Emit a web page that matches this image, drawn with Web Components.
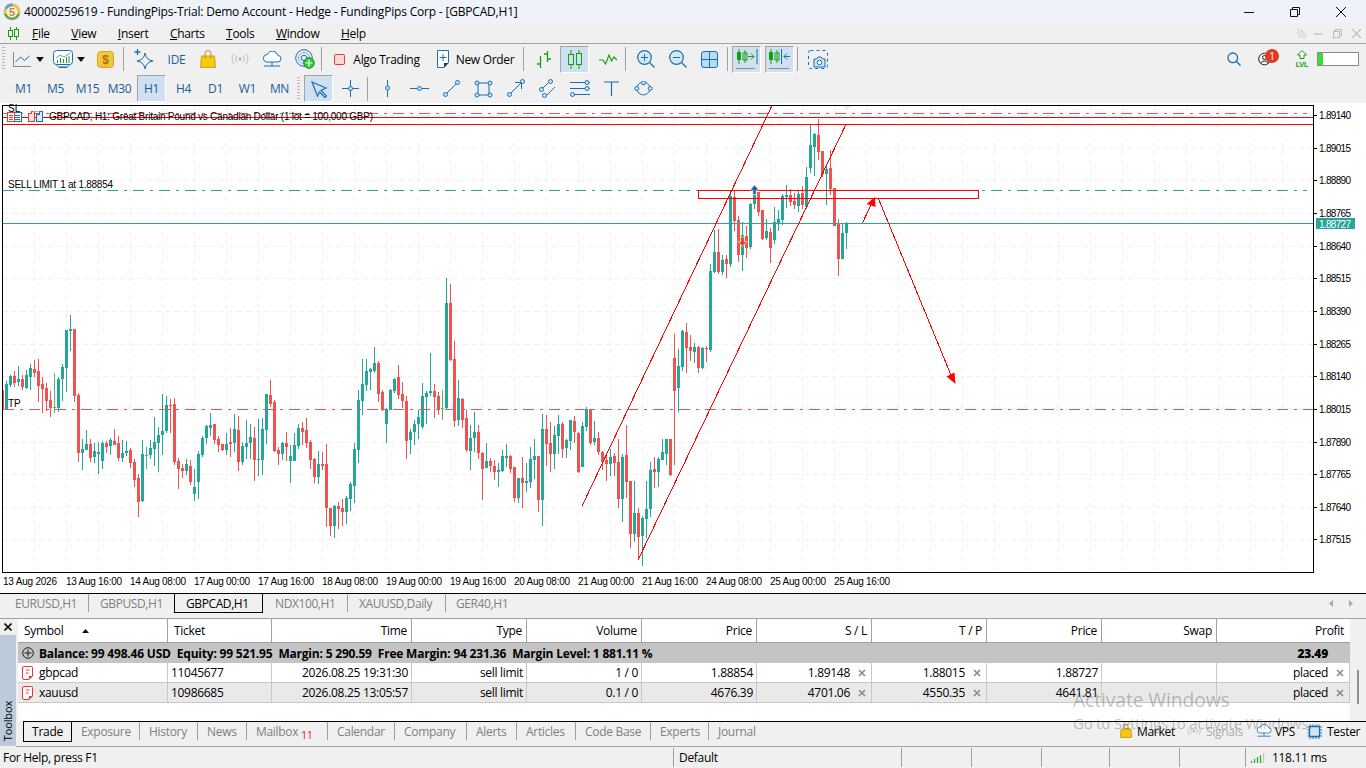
<!DOCTYPE html>
<html>
<head>
<meta charset="utf-8">
<title>FundingPips MT5</title>
<style>
  html, body { margin: 0; height: 100%; overflow: hidden; background: #f0f0f0; }
  body {
    display: flex;
    flex-direction: column;
    width: 1366px;
    height: 768px;
    font: 12px "Open Sans", "Noto Sans", sans-serif;
    letter-spacing: -0.3px;
    color: #000;
  }
</style>
</head>
<body>
  <win-titlebar></win-titlebar>
  <win-menubar></win-menubar>
  <main-toolbar></main-toolbar>
  <draw-toolbar></draw-toolbar>
  <price-chart></price-chart>
  <chart-tabs></chart-tabs>
  <terminal-panel></terminal-panel>
  <status-bar></status-bar>
  <activation-mark></activation-mark>

<script>
const BLUE = '#1a6fb0';
const GREEN = '#12a012';
const line = (d, c = BLUE, w = 1) => `<path d="${d}" fill="none" stroke="${c}" stroke-width="${w}"/>`;
const dot = (x, y, r = 2, c = BLUE, f = '#cfe6f8') => `<circle cx="${x}" cy="${y}" r="${r}" fill="${f}" stroke="${c}"/>`;
const svg = (w, h, body) => `<svg width="${w}" height="${h}" viewBox="0 0 ${w} ${h}" style="display:block">${body}</svg>`;

const ICONS = {
  lineChart: svg(18, 16, line('M.5 1V15.5H18', '#8a8a8a') + line('M2.5 11l5-5 4 3.5 5-4.5')),
  caret: svg(8, 5, '<path d="M0 0H8L4 5Z" fill="#111"/>'),
  monitor: svg(20, 19, '<rect x=".5" y=".5" width="19" height="14" rx="3" fill="#fff" stroke="#1a6fb0"/>'
    + line('M3 8L7 5l4 2 6-4', '#7a9ab5')
    + line('M4.5 13V10M7.5 13V8M10.5 13V9M13.5 13V7M16 13V6', '#1aa03a')
    + line('M6 17H14', BLUE) + line('M3 14.5L6 17.5H14L17 14.5', BLUE)),
  dollar: svg(17, 17, '<rect x=".5" y=".5" width="16" height="16" rx="3" fill="#f3c63f" stroke="#d6a52a"/>'
    + '<text x="8.5" y="13" text-anchor="middle" font-family="Liberation Sans" font-size="12" font-weight="700" fill="#a8740a">$</text>'),
  spark: svg(20, 20, line('M11 4Q12 11 19 12Q12 13 11 20Q10 13 3 12Q10 11 11 4Z') + line('M3.5 0V6M.5 3H6.5', BLUE, 1.4)),
  bag: svg(16, 18, '<path d="M1.5 6H14.5L15.5 17.5H.5Z" fill="#f8c80c" stroke="#c9a02a"/>' + line('M5 8V3.5a3 3 0 0 1 6 0V8', '#b88f20')),
  signal: svg(18, 12, '<circle cx="9" cy="6" r="1.8" fill="#bbb"/>' + line('M6 2.5a5 5 0 0 0 0 7M12 2.5a5 5 0 0 1 0 7M3 .8a8.5 8.5 0 0 0 0 10.4M15 .8a8.5 8.5 0 0 1 0 10.4', '#bbb')),
  cloud: svg(20, 17, '<path d="M5 11H15.5a3.3 3.3 0 0 0 .3-6.6A5.6 5.6 0 0 0 5.2 3.6A3.7 3.7 0 0 0 5 11Z" fill="#fff" stroke="#1a6fb0"/>' + line('M10 11V15M2 15H18')),
  radar: svg(20, 20, '<circle cx="9" cy="9" r="8.3" fill="none" stroke="#1a6fb0"/><circle cx="9" cy="9" r="5.5" fill="none" stroke="#7ab0d8"/><circle cx="9" cy="9" r="2.8" fill="none" stroke="#1a6fb0"/>'
    + '<circle cx="14" cy="14" r="5.3" fill="#2ecc40" stroke="#0f8f1f"/>' + line('M14 10.5V17.5M10.5 14H17.5', '#fff', 1.2)),
  algo: svg(11, 11, '<rect x=".5" y=".5" width="10" height="10" rx="1" fill="#fbd8d0" stroke="#e53935"/>'),
  order: svg(14, 18, '<path d="M1.5 .5H12.5V12.5L8 17.5H1.5Z" fill="#fff" stroke="#1a6fb0"/>' + line('M7 4V11M3.5 7.5H10.5') + '<path d="M8 17.5V13H12.5Z" fill="#333"/>'),
  bars: svg(18, 18, line('M5.5 6V18M2 14H5.5M12.5 1V12M12.5 4H9M12.5 9H16', GREEN, 1.3)),
  candles: svg(16, 19, line('M4 0V19M12 0V19', GREEN) + `<rect x="1.5" y="4.5" width="5" height="10" fill="#cfe0f0" stroke="${GREEN}"/><rect x="9.5" y="3.5" width="5" height="11" fill="#cfe0f0" stroke="${GREEN}"/>`),
  lineGreen: svg(18, 14, line('M0 8H4L6.5 12L10 3L12.5 9L15 5L18 8', GREEN, 1.2)),
  zoomIn: svg(18, 18, '<circle cx="7.5" cy="7.5" r="6.8" fill="#cfe8fa" stroke="#1a6fb0" stroke-width="1.2"/>' + line('M7.5 4V11M4 7.5H11') + line('M12.5 12.5L17.5 17.5', BLUE, 1.2)),
  zoomOut: svg(18, 18, '<circle cx="7.5" cy="7.5" r="6.8" fill="#cfe8fa" stroke="#1a6fb0" stroke-width="1.2"/>' + line('M4 7.5H11') + line('M12.5 12.5L17.5 17.5', BLUE, 1.2)),
  tile: svg(17, 17, '<rect x=".5" y=".5" width="16" height="16" rx="2.5" fill="#b7dcf8" stroke="#1a6fb0"/>' + line('M8.5 1V16M1 8.5H16')),
  autoScroll: svg(23, 22, line('M4 1V16M10 2V15', GREEN) + '<rect x="2" y="4" width="4" height="8" fill="#12a012"/><rect x="8" y="5" width="4" height="7" fill="none" stroke="#12a012"/>'
    + line('M13 8.5H19M16 5.5L19 8.5L16 11.5', GREEN) + line('M22 1V16') + line('M1 20.5H20', '#8a8a8a')),
  chartShift: svg(23, 22, line('M3 1V16M9 2V15', GREEN) + '<rect x="1" y="4" width="4" height="8" fill="#12a012"/><rect x="7" y="5" width="4" height="7" fill="none" stroke="#12a012"/>'
    + line('M13.5 1V16') + line('M22 8.5H16M19 5.5L16 8.5L19 11.5', BLUE) + line('M1 20.5H21', '#8a8a8a')),
  camera: svg(20, 19, '<rect x=".5" y=".5" width="19" height="18" rx="2" fill="none" stroke="#1a6fb0" stroke-dasharray="3 3"/>'
    + '<path d="M6 9H8.5L10 7H13L14.5 9H17V17H6Z" fill="#cfe6f8" stroke="#1a6fb0"/><circle cx="11.5" cy="12.5" r="2.3" fill="#fff" stroke="#1a6fb0"/>'),
  cursor: svg(18, 18, '<path d="M2 2L16 8L11 10.5L16.5 16L15 17.5L9.5 12L7.5 16Z" fill="#cfe0f0" stroke="#1a6fb0" stroke-width="1.2"/>'),
  cross: svg(17, 17, line('M8.5 0V6.5M8.5 10.5V17M0 8.5H6.5M10.5 8.5H17') + dot(8.5, 8.5)),
  vLine: svg(7, 17, line('M3.5 0V6M3.5 10V17') + dot(3.5, 8)),
  hLine: svg(19, 7, line('M0 3.5H7M12 3.5H19') + dot(9.5, 3.5)),
  trend: svg(19, 19, line('M5 14L14 5') + dot(3.5, 15.5) + dot(15.5, 3.5)),
  rect: svg(19, 18, line('M4 3H15V15H4Z') + dot(3, 3) + dot(16, 3) + dot(3, 15) + dot(16, 15)),
  arrow: svg(19, 19, line('M5 14L15 4M9 3.5H15.5V10') + dot(3.5, 15.5) + dot(16.5, 2.5)),
  channel: svg(19, 19, line('M5 9L11 3M8 17L17 8') + dot(3.5, 10.5) + dot(12.5, 2.5) + dot(6.5, 16.5)),
  fibo: svg(20, 17, line('M4 2.5H20M4 8.5H20M4 14.5H20M0 2.5H12M0 8.5H12') + dot(17, 2.5) + dot(2.5, 14.5) + dot(17, 8.5)),
  text: svg(15, 15, line('M0 1H15M7.5 1V15', BLUE, 1.2)),
  ellipse: svg(19, 15, line('M3 5Q9 -3 16 5M3 10Q9 18 16 10') + dot(2.8, 7.5) + dot(16.2, 7.5) + dot(9.5, 1.8)),
  search: svg(14, 14, '<circle cx="5.8" cy="5.8" r="4.8" fill="none" stroke="#1a6fb0" stroke-width="1.3"/>' + line('M9.3 9.3L13.5 13.5', BLUE, 1.4)),
  user: svg(13, 14, '<circle cx="6.5" cy="7" r="5.8" fill="none" stroke="#222"/><circle cx="6.5" cy="5.5" r="2" fill="none" stroke="#222"/>' + line('M2.5 11Q6.5 7 10.5 11', '#222')),
  lvl: svg(14, 18, '<path d="M7 .5L11.5 5H9V8.5H5V5H2.5Z" fill="#fff" stroke="#12a012"/>'
    + '<text x="7" y="17" text-anchor="middle" font-family="Liberation Sans" font-size="7.5" font-weight="700" fill="#12a012">LVL</text>'),
  chip: svg(15, 15, line('M3 .5V15M6 .5V15M9 .5V15M12 .5V15M.5 3H15M.5 6H15M.5 9H15M.5 12H15', BLUE) + '<rect x="2.5" y="2.5" width="10" height="10" rx="1" fill="#cfe6f8" stroke="#1a6fb0" stroke-width="1.3"/>'),
  docRed: svg(11, 14, '<path d="M2 .5H9.5A1 1 0 0 1 10.5 1.5V10L7 13.5H2A1.5 1.5 0 0 1 .5 12V2A1.5 1.5 0 0 1 2 .5Z" fill="#fff" stroke="#e53935"/>' + line('M4 4H7.5M4 7H6.5', '#e53935') + '<path d="M7 13.5V10H10.5Z" fill="#e53935"/>'),
  xMark: svg(8, 8, line('M1 1L7 7M7 1L1 7', '#8a8a8a', 1.6)),
  plusRound: svg(12, 12, '<circle cx="6" cy="6" r="5.3" fill="none" stroke="#222"/>' + line('M6 2.5V9.5M2.5 6H9.5', '#222'))
};

class ToolBtn extends HTMLElement {
  constructor() {
    super();
    const root = this.attachShadow({ mode: 'open' });
    root.innerHTML = `
      <style>
        :host {
          display: flex;
          flex: none;
          align-items: center;
          justify-content: center;
          box-sizing: border-box;
          width: var(--w, 29px);
          height: 27px;
          margin-left: var(--ml, 3px);
          white-space: nowrap;
          color: var(--tc, #1d5c96);
        }
        :host([pressed]) {
          background: #cfe0f0;
          border-top: 1px solid #a3a3a3;
          border-left: 1px solid #a3a3a3;
          border-right: 1px solid #fff;
          border-bottom: 1px solid #fff;
        }
      </style>
      <slot></slot>`;
  }
}

class WinTitlebar extends HTMLElement {
  constructor() {
    super();
    const root = this.attachShadow({ mode: 'open' });
    root.innerHTML = `
      <style>
        :host { display: flex; flex: none; align-items: center; height: 23px; background: #eef3fa; padding: 0 2px 0 3px; }
        .name { margin-left: 3px; white-space: nowrap; flex: 1; letter-spacing: -0.19px; }
        .ctl { display: flex; }
        .ctl span { width: 46px; display: flex; justify-content: center; }
      </style>
      ${svg(18, 18, '<circle cx="9" cy="9" r="8.5" fill="#e7c15a"/><path d="M1 11A8.5 8.5 0 0 0 17 11L9 9Z" fill="#5aa66a"/><path d="M1.5 5A8.5 8.5 0 0 1 10 .6L9 9Z" fill="#6d9fc9"/><circle cx="9" cy="9" r="5.6" fill="#fdf3d6"/><text x="9" y="13" text-anchor="middle" font-family="Liberation Sans" font-size="11" font-weight="700" fill="#c08a24">5</text>')}
      <div class="name">40000259619 - FundingPips-Trial: Demo Account - Hedge - FundingPips Corp - [GBPCAD,H1]</div>
      <div class="ctl">
        <span>${svg(10, 10, line('M0 5.5H10', '#111'))}</span>
        <span>${svg(10, 10, line('M.5 2.5H7.5V9.5H.5ZM2.5 2.5V.5H9.5V7.5H7.5', '#111'))}</span>
        <span>${svg(10, 10, line('M0 0L10 10M10 0L0 10', '#111'))}</span>
      </div>`;
  }
}

class WinMenubar extends HTMLElement {
  constructor() {
    super();
    const items = ['File', 'View', 'Insert', 'Charts', 'Tools', 'Window', 'Help'];
    const root = this.attachShadow({ mode: 'open' });
    root.innerHTML = `
      <style>
        :host { display: flex; flex: none; align-items: center; height: 20px; background: #f0f0f0; border-bottom: 1px solid #a0a0a0; padding-left: 8px; }
        .items { display: flex; gap: 21.5px; margin-left: 13px; flex: 1; }
        u { text-decoration-thickness: 1px; }
        .mdi { display: flex; gap: 10px; align-items: center; padding-right: 5px; }
        .pin { margin-right: -3px; }
      </style>
      ${svg(11, 13, line('M2.5 0V13M8.5 0V13', GREEN) + `<rect x=".5" y="3.5" width="4" height="6" fill="#e8f5e8" stroke="${GREEN}"/><rect x="6.5" y="2.5" width="4" height="7" fill="#e8f5e8" stroke="${GREEN}"/>`)}
      <div class="items">${items.map((t) => `<span><u>${t[0]}</u>${t.slice(1)}</span>`).join('')}</div>
      <div class="mdi">
        <span class="pin">${svg(11, 11, line('M1 1L10 10M4 1L10 7M1 4L7 10M2 10L5 7', '#c4c4c4'))}</span>
        ${svg(9, 9, line('M0 5H9', '#bdbdbd', 1.2))}
        ${svg(9, 9, line('M.5 2.5H6.5V8.5H.5ZM2.5 2.5V.5H8.5V6.5H6.5', '#bdbdbd', 1.2))}
        ${svg(9, 9, line('M0 0L9 9M9 0L0 9', '#bdbdbd', 1.2))}
      </div>`;
  }
}

class MainToolbar extends HTMLElement {
  constructor() {
    super();
    const btn = (ml, w, html, extra = '') => `<tool-btn style="--ml:${ml}px;--w:${w}px" ${extra}>${html}</tool-btn>`;
    const sep = (ml) => `<i class="sep" style="margin-left:${ml}px"></i>`;
    const root = this.attachShadow({ mode: 'open' });
    root.innerHTML = `
      <style>
        :host { display: flex; flex: none; align-items: center; height: 30px; background: #f0f0f0; --tc: #000; position: relative; }
        .sep { flex: none; width: 1px; height: 24px; background: #a0a0a0; }
        .grip { flex: none; margin-left: 2px; width: 3px; height: 24px; background: repeating-linear-gradient(#b5b5b5 0 1px, transparent 1px 3px); }
        .right { margin-left: auto; display: flex; align-items: center; }
        .badge { position: absolute; left: 1265px; top: 5px; width: 14px; height: 14px; border-radius: 50%; background: #e23b22; color: #fff; font-size: 10px; line-height: 14px; text-align: center; letter-spacing: 0; }
        .meter { width: 42px; height: 14px; box-sizing: border-box; border: 1px solid #8a8a8a; background: linear-gradient(90deg, #3ddc3d 0 5px, #fff 5px); margin: 0 7px 0 8px; }
      </style>
      <i class="grip"></i>
      ${btn(8, 18, ICONS.lineChart)}${btn(5, 8, ICONS.caret)}
      ${btn(9, 20, ICONS.monitor)}${btn(4, 8, ICONS.caret)}
      ${btn(12, 17, ICONS.dollar)}
      ${sep(9)}
      ${btn(10, 20, ICONS.spark)}
      ${btn(13, 19, '<span style="color:#1d5c96">IDE</span>')}
      ${btn(14, 16, ICONS.bag)}
      ${btn(15, 18, ICONS.signal)}
      ${btn(13, 20, ICONS.cloud)}
      ${btn(13, 20, ICONS.radar)}
      ${sep(6)}
      ${btn(12, 11, ICONS.algo)}
      ${btn(8, 67, 'Algo Trading')}
      ${btn(16, 14, ICONS.order)}
      ${btn(6, 58, 'New Order')}
      ${sep(9)}
      ${btn(11, 18, ICONS.bars)}
      ${btn(7, 29, ICONS.candles, 'pressed')}
      ${btn(10, 18, ICONS.lineGreen)}
      ${sep(8)}
      ${btn(11, 18, ICONS.zoomIn)}
      ${btn(14, 18, ICONS.zoomOut)}
      ${btn(14, 17, ICONS.tile)}
      ${sep(9)}
      ${btn(4, 29, ICONS.autoScroll, 'pressed')}
      ${btn(4, 29, ICONS.chartShift, 'pressed')}
      ${sep(3)}
      ${btn(10, 20, ICONS.camera)}
      <div class="right">
        ${btn(0, 14, ICONS.search)}
        ${btn(17, 13, ICONS.user)}
        ${btn(24, 14, ICONS.lvl)}
        <div class="meter"></div>
      </div>
      <span class="badge">1</span>`;
  }
}

class DrawToolbar extends HTMLElement {
  constructor() {
    super();
    const periods = ['M1', 'M5', 'M15', 'M30', 'H1', 'H4', 'D1', 'W1', 'MN'];
    const tools = ['vLine', 'hLine', 'trend', 'rect', 'arrow', 'channel', 'fibo', 'text', 'ellipse'];
    const root = this.attachShadow({ mode: 'open' });
    root.innerHTML = `
      <style>
        :host { display: flex; flex: none; align-items: center; height: 29px; background: #f0f0f0; padding-left: 6px; }
        .grip { flex: none; margin-left: 3px; width: 3px; height: 24px; background: repeating-linear-gradient(#b5b5b5 0 1px, transparent 1px 3px); }
        .sep { flex: none; width: 1px; height: 24px; margin-left: 2px; background: #a0a0a0; }
      </style>
      ${periods.map((p) => `<tool-btn ${p === 'H1' ? 'pressed' : ''}>${p}</tool-btn>`).join('')}
      <i class="grip"></i>
      <tool-btn style="--ml:4px" pressed>${ICONS.cursor}</tool-btn>
      <tool-btn>${ICONS.cross}</tool-btn>
      <i class="sep"></i>
      <tool-btn style="--ml:5px">${ICONS[tools[0]]}</tool-btn>
      ${tools.slice(1).map((t) => `<tool-btn>${ICONS[t]}</tool-btn>`).join('')}`;
  }
}

// candles read off the chart: colour, high, body top, body bottom, low (in 3x pixels from y=270)
const CANDLES_LEFT = `r 360 360 420 420|t 333 342 418 418|t 315 319 345 352|r 303 318 338 352|t 288 327 336 348|r 315 327 351 360|t 300 315 354 357|t 282 294 321 360|r 270 297 309 321|r 267 303 348 396|r 321 342 357 429|r 339 354 393 423|r 363 390 414 441|g 309 411 414 429|t 321 327 414 426|t 282 291 327 393|t 180 180 294 366|t 135 177 183 243|r 177 177 378 396|r 369 375 549 576|t 507 537 549 600|t 480 522 540 540|r 507 522 564 576|t 519 543 561 579|t 516 546 552 612|t 513 519 573 597|r 513 519 531 549|t 504 510 528 555|r 477 513 525 525|r 498 519 564 573|t 510 549 564 576|t 513 543 549 558|r 534 540 579 594|r 567 576 630 651|r 612 624 696 741|t 510 552 693 696|g 531 555 558 597|t 510 534 555 567|t 441 516 537 588|t 471 495 519 606|t 372 483 495 555|t 378 405 483 489|r 387 405 408 489|r 384 402 576 585|r 564 573 597 657|r 582 594 603 624|t 567 582 603 615|r 570 588 636 645|t 597 651 672 693|t 543 552 636 687|t 498 504 555 561|t 465 468 504 522|t 429 465 474 498|r 462 462 510 522|r 498 507 525 546|r 522 522 540 543|t 489 522 540 555|r 474 516 522 561|t 432 477 519 546|r 438 480 576 603|t 516 528 576 585|t 450 519 531 567|t 462 501 519 567|r 471 504 570 633|t 447 567 570 618|t 444 477 570 615|t 372 372 480 522|r 330 375 402 411|r 390 396 543 546|r 531 540 552 585|t 516 519 552 570|r 486 519 531 573|t 525 558 573 639|t 489 525 573 573|t 462 474 528 537|r 456 474 486 525|r 444 480 519 534|r 510 516 570 597|r 564 567 621 639|t 543 582 621 642|r 546 582 588 600|r 522 582 714 771|r 714 714 768 798|t 705 708 768 804|r 696 708 717 777`;
const CANDLES_MID = `r 687 714 726 768|t 678 684 726 762|t 636 642 687 723|t 519 537 648 699|t 360 390 540 579|t 267 342 393 435|t 267 303 345 363|t 294 297 306 360|t 231 279 303 309|r 273 279 372 396|r 360 366 420 423|t 414 417 462 519|t 357 360 420 420|t 324 327 363 369|r 285 321 375 387|r 336 372 393 414|r 378 393 513 567|t 477 486 510 552|t 450 462 486 525|t 420 441 462 507|t 339 378 471 477|t 363 369 381 462|t 249 363 369 378|r 342 363 381 444|r 366 378 420 435|g 360 414 417 450|t 24 99 414 420|r 42 99 270 273|r 213 267 453 471|t 330 384 450 468|r 384 387 450 474|r 420 444 540 546|t 465 504 543 600|t 426 486 504 546|r 465 486 549 567|r 546 549 597 690|t 519 573 594 594|r 564 573 588 606|r 570 588 606 630|t 579 600 606 651|t 540 558 603 606|t 522 558 564 591|r 555 558 597 609|r 591 591 684 696|t 624 624 684 699|r 561 624 639 714|t 579 633 639 666|t 531 567 636 654|t 507 558 570 627|r 558 558 690 726|t 432 477 690 768|r 435 477 522 588|r 456 519 552 606|t 468 495 552 597|t 435 462 498 552|r 456 462 537 564|t 507 510 534 564|t 450 450 513 540|r 438 453 486 519|r 486 489 606 609|t 456 468 591 591|t 411 417 471 483|r 417 417 519 525|t 453 504 516 525|r 486 504 546 555|r 543 546 576 600|r 555 570 582 633|t 537 561 582 618|r 549 558 579 618|r 507 576 687 714|t 552 561 687 756|r 465 555 636 684|r 633 633 792 834|t 633 729 792 816|r 714 729 801 870|t 738 744 798 888|t 633 717 747 804|t 576 600 717 741|r 561 597 606 654|t 561 567 606 651|t 507 546 570 570|t 507 507 552 585|r 507 507 615 618|r 192 264 363 585|t 237 288 354 426`;
// the last stretch is in plain screen pixels
const CANDLES_RIGHT = `t 330 331 367 371|r 323 332 348 373|r 335 347 351 361|t 343 347 352 363|r 346 347 368 373|t 347 348 368 369|r 346 348 349 362|t 264 271 350 352|t 230 252 272 273|r 229 252 272 274|t 255 260 272 275|r 255 259 264 278|t 190 196 264 267|r 190 197 221 231|r 216 220 255 262|t 222 235 255 271|r 226 236 248 258|t 203 204 247 249|t 186 194 204 209|r 192 192 212 216|r 210 210 239 240|t 219 231 238 240|r 228 232 248 263|t 207 222 240 244|t 210 219 223 231|t 194 196 220 225|t 185 195 197 208|r 189 195 202 206|r 193 201 205 209|t 190 194 206 212|r 186 193 205 209|t 167 177 207 209|t 125 145 168 173|t 133 134 147 176|r 119 135 152 160|r 151 151 174 177|t 166 169 174 205|r 150 168 189 195|r 188 188 226 226|r 219 224 259 276|t 224 233 259 259|t 222 224 233 249`;

const CANDLE_COLORS = { t: '#26a69a', r: '#ef5350', g: '#4db87e' };
const PRICE_TICKS = ['1.89140', '1.89015', '1.88890', '1.88765', '1.88640', '1.88515', '1.88390', '1.88265', '1.88140', '1.88015', '1.87890', '1.87765', '1.87640', '1.87515'];
const TIME_TICKS = ['13 Aug 16:00', '14 Aug 08:00', '17 Aug 00:00', '17 Aug 16:00', '18 Aug 08:00', '19 Aug 00:00', '19 Aug 16:00', '20 Aug 08:00', '21 Aug 00:00', '21 Aug 16:00', '24 Aug 08:00', '25 Aug 00:00', '25 Aug 16:00'];

class PriceChart extends HTMLElement {
  constructor() {
    super();
    const root = this.attachShadow({ mode: 'open' });
    root.innerHTML = `
      <style>
        :host { display: block; flex: none; height: 490px; background: #fff; }
        svg { display: block; }
        text { font-family: "Liberation Sans", sans-serif; font-size: 10px; fill: #000; letter-spacing: 0; }
      </style>
      <svg width="1366" height="490" viewBox="0 103 1366 490">${this.grid()}${this.candles()}${this.objects()}${this.frame()}</svg>`;
  }

  grid() {
    let out = '';
    for (let x = 34; x < 1313; x += 32) out += `<path d="M${x + 0.5} 106V572"/>`;
    for (let i = 0; i < 14; i += 1) {
      const y = Math.round(115 + i * 32.65) + 0.5;
      out += `<path d="M3 ${y}H1313"/>`;
    }
    return `<g stroke="#f0f0f0" stroke-dasharray="5 4" fill="none" shape-rendering="crispEdges">${out}</g>`;
  }

  candleRect(c, i, y) {
    const [col, hi, top, bot, lo] = c.split(' ');
    const x = 2 + 4 * i;
    const t = y(top);
    const h = Math.max(y(bot) - t, 1);
    const fill = CANDLE_COLORS[col];
    return `<rect x="${x}" y="${y(hi)}" width="1" height="${Math.max(y(lo) - y(hi), 1)}" fill="${fill}"/>`
      + `<rect x="${x - 1}" y="${t}" width="3" height="${h}" fill="${fill}"/>`;
  }

  candles() {
    const zoomed = (v) => Math.round(270 + v / 3);
    const plain = (v) => Number(v);
    const left = `${CANDLES_LEFT}|${CANDLES_MID}`.split('|');
    const right = CANDLES_RIGHT.split('|');
    let out = '';
    left.forEach((c, i) => { out += this.candleRect(c, i, zoomed); });
    right.forEach((c, i) => { out += this.candleRect(c, left.length + i, plain); });
    return `<defs><clipPath id="plot"><rect x="3" y="106" width="1310" height="466"/></clipPath></defs><g clip-path="url(#plot)" shape-rendering="crispEdges">${out}</g>`;
  }

  objects() {
    const dashDot = 'stroke-dasharray="11 6 3 6"';
    return `
      <g shape-rendering="crispEdges" fill="none">
        <path d="M3 113.5H1307" stroke="#ef5350" ${dashDot}/>
        <path d="M3 190.5H1307" stroke="#26a69a" ${dashDot}/>
        <path d="M3 409.5H1313" stroke="#ef5350" ${dashDot}/>
        <path d="M3 223.5H1313" stroke="#26a69a"/>
        <path d="M3 117.5H1313M3 124.5H1313" stroke="#f00"/>
        <rect x="698.5" y="190.5" width="280" height="8" stroke="#f00"/>
        <path d="M582.3 505.5L772 105.5M638.3 559.5L846 124.3M862.3 223.3L871 205M878.3 198.3L953 380" stroke="#f00"/>
      </g>
      <path d="M875 197L875.5 207L866.5 204Z" fill="#f00"/>
      <path d="M955.5 384L946.5 376.5L954.5 372.5Z" fill="#f00"/>
      <path d="M754.5 185L759 190H756.2V194.5H752.8V190H750Z" fill="#1a5fb4" stroke="#fff" stroke-width=".6"/>
      <path d="M742.5 246.5L738 241.5H740.7V237H744.3V241.5H747Z" fill="#e2461f" stroke="#fff" stroke-width=".6"/>
      <path d="M843 106H851L847 110Z" fill="#e9e9e9"/>
      <text x="8" y="112">SL</text>
      <text x="8" y="188" textLength="105">SELL LIMIT 1 at 1.88854</text>
      <text x="8" y="407">TP</text>
      <g shape-rendering="crispEdges">
        <rect x="7.5" y="112.5" width="14" height="9" fill="#fff" stroke="#1a6fb0"/>
        <path d="M7.5 112.5H14V121.5H7.5Z" fill="#fff" stroke="#e53935"/>
        <path d="M9 115H13M9 117H13M9 119H13" stroke="#e53935"/>
        <path d="M15 115H20M15 117H20M15 119H20" stroke="#1a6fb0"/>
        <path d="M28.5 113.5H31V111.5H34.5V121.5H28.5Z" fill="#fbe3df" stroke="#e53935"/>
        <path d="M32.5 111.5H38" stroke="#aaa"/>
        <path d="M36.5 114.5H39V111.5H42.5V121.5H36.5Z" fill="#d8ecfa" stroke="#1a6fb0"/>
      </g>
      <text x="49" y="119.5" textLength="324" lengthAdjust="spacing">GBPCAD, H1:  Great Britain Pound vs Canadian Dollar (1 lot = 100,000 GBP)</text>`;
  }

  frame() {
    let out = '<rect x="2.5" y="105.5" width="1311" height="467" fill="none" stroke="#000" shape-rendering="crispEdges"/>';
    PRICE_TICKS.forEach((p, i) => {
      const y = Math.round(115 + i * 32.65);
      out += `<rect x="1313" y="${y}" width="4" height="1" fill="#000"/><text x="1319" y="${y + 4}" textLength="32">${p}</text>`;
    });
    out += '<rect x="1316" y="218" width="39" height="11" fill="#26a69a"/><text x="1319" y="227.5" textLength="32" style="fill:#fff">1.88727</text>';
    out += '<text x="3" y="585" textLength="54">13 Aug 2026</text>';
    TIME_TICKS.forEach((t, i) => { out += `<text x="${66 + i * 64}" y="585" textLength="56">${t}</text>`; });
    return out;
  }
}

class ChartTabs extends HTMLElement {
  constructor() {
    super();
    const tabs = [['EURUSD,H1', 85, 12], ['GBPUSD,H1', 86, 11], ['GBPCAD,H1', 89, 11], ['NDX100,H1', 84, 12], ['XAUUSD,Daily', 98, 11], ['GER40,H1', 100, 10]];
    const root = this.attachShadow({ mode: 'open' });
    root.innerHTML = `
      <style>
        :host { display: flex; flex: none; height: 26px; box-sizing: border-box; background: #f0f0f0; border-top: 1px solid #000; border-bottom: 1px solid #a0a0a0; padding-left: 3px; color: #808080; letter-spacing: -0.4px; }
        .tab { display: flex; flex: none; align-items: center; box-sizing: border-box; height: 18px; white-space: nowrap; }
        .tab + .tab { border-left: 1px solid #a0a0a0; }
        .on { color: #000; background: #f0f0f0; border-left: 1px solid #000 !important; border-right: 1px solid #000; border-bottom: 1px solid #000; height: 19px; }
        .on + .tab { border-left: 0; padding-left: 12px !important; }
        .nav { margin-left: auto; display: flex; gap: 16px; align-items: center; height: 18px; padding-right: 13px; }
      </style>
      ${tabs.map(([t, w, p]) => `<div class="tab ${t.startsWith('GBPCAD') ? 'on' : ''}" style="width:${w}px;padding-left:${p}px">${t}</div>`).join('')}
      <div class="nav">
        ${svg(4, 7, '<path d="M4 0V7L0 3.5Z" fill="#a8a8a8"/>')}
        ${svg(4, 7, '<path d="M0 0V7L4 3.5Z" fill="#a8a8a8"/>')}
      </div>`;
  }
}

class TradeTable extends HTMLElement {
  constructor() {
    super();
    const heads = ['Symbol', 'Ticket', 'Time', 'Type', 'Volume', 'Price', 'S / L', 'T / P', 'Price', 'Swap', 'Profit'];
    const rows = [
      { sym: 'gbpcad', cells: ['11045677', '2026.08.25 19:31:30', 'sell limit', '1 / 0', '1.88854', '1.89148', '1.88015', '1.88727', '', 'placed'] },
      { sym: 'xauusd', cells: ['10986685', '2026.08.25 13:05:57', 'sell limit', '0.1 / 0', '4676.39', '4701.06', '4550.35', '4641.81', '', 'placed'] }
    ];
    const withX = [5, 6, 9];
    const root = this.attachShadow({ mode: 'open' });
    root.innerHTML = `
      <style>
        :host { display: block; flex: 1; background: #fff; }
        .grid { display: grid; grid-template-columns: 150px 104px 140px repeat(7, 115px) 133px; grid-template-rows: 24px 20px 20px 20px; }
        .head { display: flex; align-items: center; justify-content: flex-end; box-sizing: border-box; padding: 0 4px; border-right: 1px solid #a0a0a0; border-bottom: 1px solid #a0a0a0; }
        .head.left { justify-content: flex-start; padding-left: 6px; }
        .head.last { border-right: 0; padding-right: 6px; }
        .sort { margin-left: 18px; }
        .bal { grid-column: 1 / -1; display: flex; align-items: center; background: #c4c4c4; font-weight: 700; padding-left: 4px; white-space: nowrap; position: relative; letter-spacing: -0.2px; }
        .bal span { margin-left: 6px; }
        .bal span:first-of-type { margin-left: 5px; }
        .bal b { position: absolute; left: 1270px; width: 40px; text-align: right; }
        .cell { display: flex; align-items: center; justify-content: flex-end; box-sizing: border-box; padding: 0 3px; border-right: 1px solid #c8c8c8; border-bottom: 1px solid #c8c8c8; white-space: nowrap; }
        .cell.left { justify-content: flex-start; }
        .cell.sym { justify-content: flex-start; padding-left: 4px; gap: 6px; }
        .alt { background: #e9e9e9; }
        .x { margin: 0 2px 0 8px; }
      </style>
      <div class="grid">
        ${heads.map((h, i) => `<div class="head ${i < 2 ? 'left' : ''} ${i === 10 ? 'last' : ''}">${h}${i === 0 ? '<span class="sort">' + svg(7, 4, '<path d="M0 4L3.5 0L7 4Z" fill="#111"/>') + '</span>' : ''}</div>`).join('')}
        <div class="bal">${ICONS.plusRound}<span>Balance: 99 498.46 USD</span><span>Equity: 99 521.95</span><span>Margin: 5 290.59</span><span>Free Margin: 94 231.36</span><span>Margin Level: 1 881.11 %</span><b>23.49</b></div>
        ${rows.map((r, n) => `
          <div class="cell sym ${n ? 'alt' : ''}">${ICONS.docRed}${r.sym}</div>
          ${r.cells.map((c, i) => `<div class="cell ${i === 0 ? 'left' : ''} ${n ? 'alt' : ''}">${c}${withX.includes(i) ? `<span class="x">${ICONS.xMark}</span>` : ''}</div>`).join('')}
        `).join('')}
      </div>`;
  }
}

class TerminalPanel extends HTMLElement {
  constructor() {
    super();
    const tabs = [['Exposure', 67], ['History', 58], ['News', 49], ['Mailbox', 81], ['Calendar', 67], ['Company', 72], ['Alerts', 50], ['Articles', 59], ['Code Base', 75], ['Experts', 58], ['Journal', 60]];
    const root = this.attachShadow({ mode: 'open' });
    root.innerHTML = `
      <style>
        :host { display: flex; flex: none; height: 128px; background: #f0f0f0; }
        .side { flex: none; width: 16px; height: 127px; display: flex; flex-direction: column; align-items: center; }
        .close { flex: none; height: 16px; display: flex; align-items: center; }
        .blue { flex: 1; width: 100%; background: #bccbdb; display: flex; justify-content: center; align-items: flex-end; }
        .label { writing-mode: vertical-rl; transform: rotate(180deg); padding-top: 5px; line-height: 16px; font-size: 11px; letter-spacing: -0.15px; }
        .main { flex: 1; display: flex; flex-direction: column; min-width: 0; border-bottom: 1px solid #a0a0a0; }
        .upper { flex: 1; display: flex; min-height: 0; margin-left: 2px; }
        .rail { flex: none; width: 16px; position: relative; }
        .thumb { position: absolute; left: 7px; top: 51px; width: 2px; height: 34px; background: #8f8f8f; }
        .lower { flex: none; height: 25px; box-sizing: border-box; display: flex; margin-left: 7px; border-top: 1px solid #000; color: #808080; position: relative; }
        .tab { display: flex; flex: none; align-items: center; box-sizing: border-box; height: 18px; padding-left: 9px; white-space: nowrap; }
        .tab + .tab { border-left: 1px solid #a0a0a0; }
        .tab.on { padding: 0; width: 49px; justify-content: center; color: #000; border-left: 1px solid #000; border-right: 1px solid #000; border-bottom: 1px solid #000; height: 20px; }
        .tab.on + .tab { border-left: 0; }
        .red { color: #f00; font-size: 10px; margin: 7px 0 0 3px; letter-spacing: 0; font-style: normal; }
        .right { margin-left: auto; display: flex; align-items: center; height: 18px; color: #000; padding-right: 9px; }
        .right svg { flex: none; }
        .off { color: #aaa; }
        .t { flex: none; }
        .i { display: flex; flex: none; }
      </style>
      <div class="side">
        <div class="close">${svg(8, 8, line('M.5 .5L7.5 7.5M7.5 .5L.5 7.5', '#111', 1.6))}</div>
        <div class="blue"><div class="label">Toolbox</div></div>
      </div>
      <div class="main">
        <div class="upper">
          <trade-table></trade-table>
          <div class="rail"><div class="thumb"></div></div>
        </div>
        <div class="lower">
          <div class="tab on">Trade</div>
          ${tabs.map(([t, w]) => `<div class="tab" style="width:${w}px">${t}${t === 'Mailbox' ? '<i class="red">11</i>' : ''}</div>`).join('')}
          <div class="right">
            ${svg(12, 14, '<path d="M1 5H11L11.5 13.5H.5Z" fill="#f8c80c" stroke="#c9a02a"/>' + line('M4 6V2.5a2 2 0 0 1 4 0V6', '#b88f20'))}
            <span class="t" style="width:37px;margin-left:5px">Market</span>
            <span class="off i" style="margin-left:13px">${ICONS.signal.replace('width="18" height="12"', 'width="14" height="10"')}</span>
            <span class="off t" style="width:37px;margin-left:5px">Signals</span>
            <span class="i" style="margin-left:13px">${ICONS.cloud.replace('width="20" height="17"', 'width="16" height="14"')}</span>
            <span class="t" style="margin-left:3px;width:20px">VPS</span>
            <span class="i" style="margin-left:12px">${ICONS.chip}</span>
            <span class="t" style="margin-left:5px;width:30px">Tester</span>
          </div>
        </div>
      </div>`;
  }
}

class StatusBar extends HTMLElement {
  constructor() {
    super();
    const widths = [228, 70, 70, 68, 70, 66];
    const root = this.attachShadow({ mode: 'open' });
    root.innerHTML = `
      <style>
        :host { display: flex; flex: none; height: 21px; background: #f0f0f0; align-items: center; white-space: nowrap; }
        .first { width: 670px; padding-left: 3px; }
        .cell { box-sizing: border-box; height: 19px; border-left: 1px solid #a0a0a0; display: flex; align-items: center; padding-left: 5px; }
        .ping { gap: 7px; }
      </style>
      <div class="first">For Help, press F1</div>
      <div class="cell" style="width:${widths[0]}px">Default</div>
      ${widths.slice(1, 5).map((w) => `<div class="cell" style="width:${w}px"></div>`).join('')}
      <div class="cell" style="width:66px"></div>
      <div class="cell ping" style="flex:1">
        ${svg(14, 11, line('M.5 11V9M3.5 11V7M6.5 11V5M9.5 11V3', '#22a722', 1.2) + line('M12.5 11V1', '#c4c4c4', 1.2))}
        <span>118.11 ms</span>
      </div>`;
  }
}

class ActivationMark extends HTMLElement {
  constructor() {
    super();
    const root = this.attachShadow({ mode: 'open' });
    root.innerHTML = `
      <style>
        :host { position: absolute; left: 1073px; top: 688px; color: rgba(40, 40, 40, .28); white-space: nowrap; letter-spacing: 0; pointer-events: none; }
        .big { font-size: 19.3px; line-height: 24px; letter-spacing: -0.1px; }
        .small { font-size: 15px; line-height: 20px; margin-top: 1px; letter-spacing: -0.2px; }
      </style>
      <div class="big">Activate Windows</div>
      <div class="small">Go to Settings to activate Windows.</div>`;
  }
}

customElements.define('tool-btn', ToolBtn);
customElements.define('win-titlebar', WinTitlebar);
customElements.define('win-menubar', WinMenubar);
customElements.define('main-toolbar', MainToolbar);
customElements.define('draw-toolbar', DrawToolbar);
customElements.define('price-chart', PriceChart);
customElements.define('chart-tabs', ChartTabs);
customElements.define('trade-table', TradeTable);
customElements.define('terminal-panel', TerminalPanel);
customElements.define('status-bar', StatusBar);
customElements.define('activation-mark', ActivationMark);
</script>
</body>
</html>
